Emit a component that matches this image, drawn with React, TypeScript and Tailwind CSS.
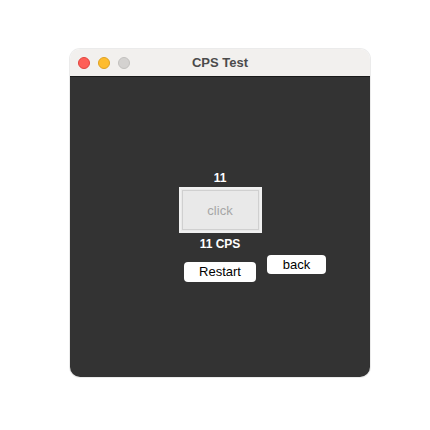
import React from 'react';

export default function App() {
  return (
    <div className="w-[430px] h-[430px] bg-white pt-[49px] pl-[70px]" style={{ fontFamily: '"Liberation Sans", Arial, sans-serif' }}>
      <div className="w-[300px] h-[328px] rounded-[10px] overflow-hidden flex flex-col shadow-[0_0_0_1px_rgba(0,0,0,0.08)]">
        <div className="relative h-[28px] bg-[#f2f0ee] flex items-center justify-center border-b border-[#1a1a1a]">
          <div className="absolute left-[8px] top-[8px] flex gap-[8px]">
            <span className="w-[12px] h-[12px] rounded-full bg-[#fe5f57] border border-[#e0443e]" />
            <span className="w-[12px] h-[12px] rounded-full bg-[#febc2e] border border-[#dea123]" />
            <span className="w-[12px] h-[12px] rounded-full bg-[#d4d2d0] border border-[#c2c0be]" />
          </div>
          <span className="text-[13px] font-bold text-[#4b4b4b]">CPS Test</span>
        </div>
        <div className="flex-1 bg-[#333333] flex flex-col items-center pt-[94px]">
          <div className="text-[12px] leading-[14px] font-bold text-white">11</div>
          <div className="mt-[2px] w-[83px] h-[46px] bg-[#e9e9e9] border-[2px] border-[#f0f0f0] p-[1px]">
            <div className="w-full h-full border border-[#d0d0d0] flex items-center justify-center pt-[2px] text-[13px] text-[#a6a6a6]">
              click
            </div>
          </div>
          <div className="mt-[4px] text-[12px] leading-[14px] font-bold text-white">11 CPS</div>
          <div className="self-start ml-[114px] mt-[4px] flex items-start gap-[11px]">
            <button className="mt-[7px] w-[72px] h-[20px] bg-white rounded-[4px] text-[13px] leading-[20px] text-black">Restart</button>
            <button className="w-[59px] h-[19px] bg-white rounded-[4px] text-[13px] leading-[17px] text-black">back</button>
          </div>
        </div>
      </div>
    </div>
  );
}
